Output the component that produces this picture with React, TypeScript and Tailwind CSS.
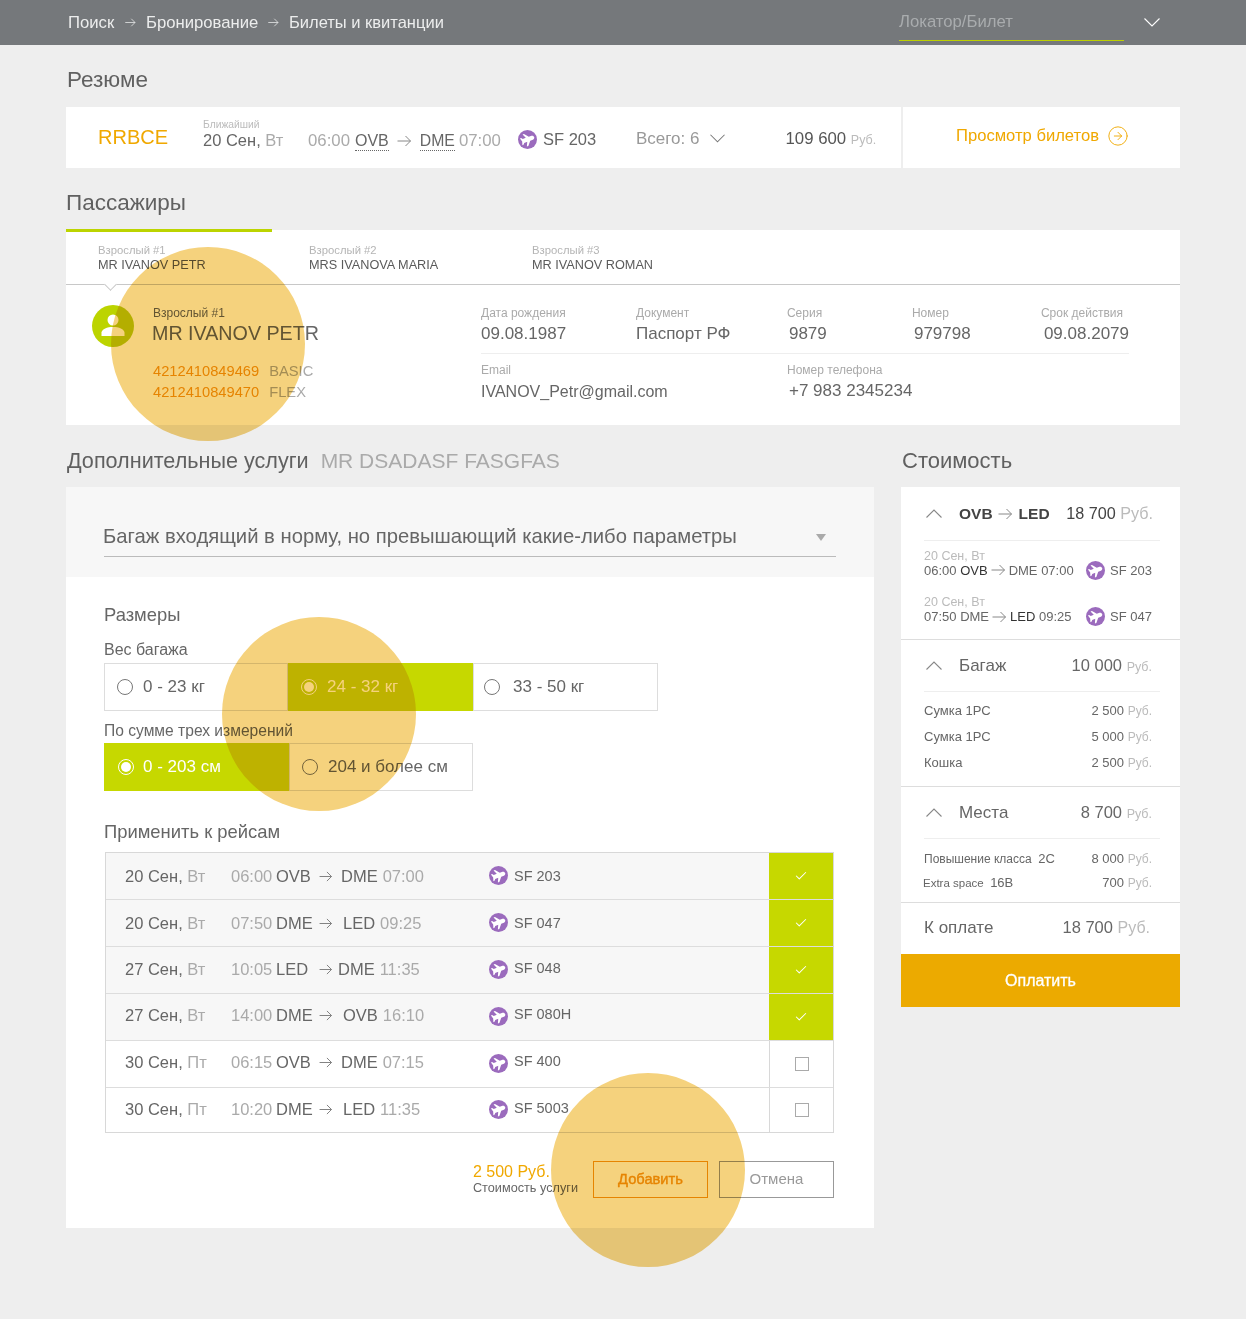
import React from 'react';
import { Check, CircleArrowRight } from 'lucide-react';

const flights = [
  { date: '20 Сен,', day: 'Вт', t1: '06:00', from: 'OVB', to: 'DME', t2: '07:00', no: 'SF 203', on: true, toCls: 'ml-[8px]', nudge: '' },
  { date: '20 Сен,', day: 'Вт', t1: '07:50', from: 'DME', to: 'LED', t2: '09:25', no: 'SF 047', on: true, toCls: 'ml-[10px]', nudge: '' },
  { date: '27 Сен,', day: 'Вт', t1: '10:05', from: 'LED', to: 'DME', t2: '11:35', no: 'SF 048', on: true, toCls: 'ml-[5px]', nudge: '-mt-[2px]' },
  { date: '27 Сен,', day: 'Вт', t1: '14:00', from: 'DME', to: 'OVB', t2: '16:10', no: 'SF 080H', on: true, toCls: 'ml-[10px]', nudge: '-mt-[4px]' },
  { date: '30 Сен,', day: 'Пт', t1: '06:15', from: 'OVB', to: 'DME', t2: '07:15', no: 'SF 400', on: false, toCls: 'ml-[8px]', nudge: '-mt-[4px]' },
  { date: '30 Сен,', day: 'Пт', t1: '10:20', from: 'DME', to: 'LED', t2: '11:35', no: 'SF 5003', on: false, toCls: 'ml-[10px]', nudge: '-mt-[2px]' },
];

function Arrow({ cls }: { cls: string }) {
  return (
    <svg viewBox="0 0 14 12" className={`shrink-0 ${cls}`} fill="none" stroke="currentColor" strokeWidth="1">
      <path d="M0 6h13M8 1l5 5-5 5" />
    </svg>
  );
}

function Chevron({ cls, up = false }: { cls: string; up?: boolean }) {
  return (
    <svg viewBox="0 0 16 9" className={`shrink-0 ${cls}`} fill="none" stroke="currentColor" strokeWidth="1.100">
      <path d={up ? 'M0.500 8.500L8 1l7.500 7.500' : 'M0.500 0.500L8 8l7.500-7.500'} />
    </svg>
  );
}

function PlaneBadge({ cls = '' }: { cls?: string }) {
  return (
    <span className={`w-[19px] h-[19px] rounded-full bg-[#9b6bbd] inline-flex items-center justify-center shrink-0 ${cls}`}>
      <svg viewBox="0 0 24 24" className="w-[17px] h-[17px] -rotate-[20deg]" fill="#fff">
        <path d="M22 12c0-1.600-1.300-3-3-3h-4L10 3H7.800l2.700 6H6L4.200 7H2.500L4 12l-1.500 5h1.700L6 15h4.500l-2.700 6H10l5-6h4c1.700 0 3-1.400 3-3z" />
      </svg>
    </span>
  );
}

function Radio({ on, label, cls, pad = 'pl-[12px]', gap = 'ml-[10px]' }: { on: boolean; label: string; cls: string; pad?: string; gap?: string }) {
  return (
    <div className={`${cls} ${pad} h-[48px] flex items-center text-[17px] ${on ? 'bg-[#c6d800] text-white' : 'border border-[#ddd] text-[#666] bg-white'}`}>
      <span className={`w-[16px] h-[16px] rounded-full border flex items-center justify-center shrink-0 ${on ? 'border-white' : 'border-[#777]'}`}>
        {on && <span className="w-[10px] h-[10px] rounded-full bg-white" />}
      </span>
      <span className={gap}>{label}</span>
    </div>
  );
}

function Rub({ cls = 'text-[14px]' }: { cls?: string }) {
  return <span className={`${cls} text-[#bbb]`}>Руб.</span>;
}

function Spot({ cls }: { cls: string }) {
  return <div className={`absolute w-[194px] h-[194px] rounded-full bg-[#f5d27d] mix-blend-multiply pointer-events-none ${cls}`} />;
}

export default function App() {
  return (
    <div className="relative h-[1319px] bg-[#eeeeee] text-[#666] overflow-hidden" style={{ fontFamily: '"Liberation Sans", Arial, sans-serif' }}>
      <header className="h-[45px] bg-[#75787b] flex items-center pl-[68px] pr-[86px] text-[16.700px] text-[#eceded]">
        <span className="w-[48px]">Поиск</span>
        <Arrow cls="w-[11px] h-[9px] ml-[9px] mr-[10px]" />
        <span className="w-[113px] whitespace-nowrap">Бронирование</span>
        <Arrow cls="w-[11px] h-[9px] ml-[9px] mr-[10px]" />
        <span className="text-[16.500px]">Билеты и квитанции</span>
        <div className="ml-auto self-start w-[225px] h-[41px] pt-[3px] border-b border-[#bcd000] flex items-center text-[#a9acae] mr-[20px]">Локатор/Билет</div>
        <Chevron cls="w-[16px] h-[9px] text-white" />
      </header>

      <main className="px-[66px] w-[1246px]">
        <h2 className="text-[22.500px] leading-[26px] mt-[22px] ml-[1px] text-[#606060]">Резюме</h2>
        <section className="mt-[14px] h-[61px] flex bg-white items-center">
          <div className="w-[835px] h-full flex items-center pl-[32px] text-[#666]">
            <span className="w-[105px] text-[#f0a800] text-[20px] -mt-[2px]">RRBCE</span>
            <div className="w-[105px] leading-none -mt-[7px]">
              <div className="text-[10.300px] text-[#bbb]">Ближайший</div>
              <div className="text-[16.500px] mt-[2px]">20 Сен, <span className="text-[#aaa]">Вт</span></div>
            </div>
            <div className="w-[210px] flex items-center text-[16.800px] mt-[7px]">
              <span className="w-[47px] text-[#aaa]">06:00</span>
              <span className="text-[16px] border-b border-dotted border-[#666] leading-[19px]">OVB</span>
              <Arrow cls="w-[15px] h-[12px] mx-[8px] text-[#888]" />
              <span className="text-[15.800px] border-b border-dotted border-[#666] leading-[19px]">DME</span>
              <span className="ml-[4px] text-[#aaa]">07:00</span>
            </div>
            <PlaneBadge cls="mt-[4px]" />
            <span className="ml-[6px] w-[93px] text-[16.500px] mt-[3px]">SF 203</span>
            <span className="text-[#999] text-[17px] mt-[3px]">Всего: 6</span>
            <Chevron cls="w-[15px] h-[9px] ml-[11px] mt-[2px] text-[#777]" />
            <span className="ml-[60px] text-[16.800px] mt-[2px] text-[#555] whitespace-nowrap">109 600 <Rub cls="text-[12.500px]" /></span>
          </div>
          <div className="w-[2px] h-full bg-[#eeeeee]" />
          <div className="flex-1 flex items-center pl-[53px] text-[#f0a800] text-[16.600px] -mt-[2px]">
            Просмотр билетов
            <CircleArrowRight className="w-[22px] h-[22px] ml-[8px]" strokeWidth={1} />
          </div>
        </section>

        <h2 className="text-[22.500px] leading-[26px] mt-[22px] text-[#606060]">Пассажиры</h2>
        <section className="mt-[14px] h-[195px] bg-white flex flex-col">
          <div className="relative h-[55px] shrink-0 border-b border-[#c8c8c8] flex pl-[32px]">
            <div className="absolute left-0 top-0 w-[206px] h-[3px] -mt-[1px] bg-[#bcd400]" />
            <div className="w-[211px] pt-[15px] leading-none">
              <div className="text-[11.300px] text-[#b5b5b5]">Взрослый #1</div>
              <div className="text-[12.700px] mt-[3px] text-[#5a5a5a]">MR IVANOV PETR</div>
            </div>
            <div className="w-[223px] pt-[15px] leading-none">
              <div className="text-[11.300px] text-[#b5b5b5]">Взрослый #2</div>
              <div className="text-[12.700px] mt-[3px] text-[#5a5a5a]">MRS IVANOVA MARIA</div>
            </div>
            <div className="pt-[15px] leading-none">
              <div className="text-[11.300px] text-[#b5b5b5]">Взрослый #3</div>
              <div className="text-[12.700px] mt-[3px] text-[#5a5a5a]">MR IVANOV ROMAN</div>
            </div>
            <div className="absolute left-[40px] -bottom-[5px] w-[9px] h-[9px] rotate-45 bg-white border-r border-b border-[#c8c8c8]" />
          </div>
          <div className="flex flex-1">
            <div className="w-[415px] flex pl-[26px] pt-[20px]">
              <div className="w-[42px] h-[42px] rounded-full bg-[#bcd400] flex items-center justify-center shrink-0">
                <svg viewBox="0 0 28 28" className="w-[28px] h-[28px]" fill="#fff">
                  <circle cx="14" cy="8" r="5.500" />
                  <path d="M2.500 24v-3.500C3 17 8 15 14 15s11 2 11.500 5.500V24z" />
                </svg>
              </div>
              <div className="ml-[19px] pt-[2px]">
                <div className="text-[12px] leading-none">Взрослый #1</div>
                <div className="text-[19.700px] leading-none mt-[5px] -ml-[1px] whitespace-nowrap">MR IVANOV PETR</div>
                <div className="mt-[17px] text-[14.700px] leading-[21px] whitespace-nowrap">
                  <div><span className="text-[#f0a000]">4212410849469</span><span className="ml-[10px] text-[#aaa]">BASIC</span></div>
                  <div><span className="text-[#f0a000]">4212410849470</span><span className="ml-[10px] text-[#aaa]">FLEX</span></div>
                </div>
              </div>
            </div>
            <div className="w-[648px] pt-[22px]">
              <div className="flex h-[47px] border-b border-[#eee] leading-none">
                <div className="w-[155px]"><div className="text-[12px] text-[#aaa]">Дата рождения</div><div className="text-[17px] mt-[6px]">09.08.1987</div></div>
                <div className="w-[151px]"><div className="text-[12px] text-[#aaa]">Документ</div><div className="text-[17px] mt-[6px]">Паспорт РФ</div></div>
                <div className="w-[125px]"><div className="text-[12px] text-[#aaa]">Серия</div><div className="text-[17px] mt-[6px] ml-[2px]">9879</div></div>
                <div className="w-[129px]"><div className="text-[12px] text-[#aaa]">Номер</div><div className="text-[17px] mt-[6px] ml-[2px]">979798</div></div>
                <div><div className="text-[12px] text-[#aaa]">Срок действия</div><div className="text-[17px] mt-[6px] ml-[3px]">09.08.2079</div></div>
              </div>
              <div className="flex mt-[10px] leading-none">
                <div className="w-[306px]"><div className="text-[12px] text-[#aaa]">Email</div><div className="text-[16px] mt-[8px]">IVANOV_Petr@gmail.com</div></div>
                <div><div className="text-[12px] text-[#aaa]">Номер телефона</div><div className="text-[17px] mt-[6px] ml-[2px]">+7 983 2345234</div></div>
              </div>
            </div>
          </div>
        </section>

        <div className="flex mt-[23px] items-start">
          <div className="w-[808px] shrink-0">
            <h2 className="text-[21.600px] leading-[26px] ml-[1px] text-[#606060] whitespace-nowrap">Дополнительные услуги <span className="ml-[6px] text-[21px] text-[#aaa]">MR DSADASF FASGFAS</span></h2>
            <section className="mt-[13px] h-[741px] bg-white">
              <div className="h-[90px] bg-[#f7f7f7] px-[38px] pt-[33px]">
                <div className="h-[37px] border-b border-[#bbb] flex items-start justify-between text-[20.250px] leading-[32px]">
                  <span className="-ml-[1px]">Багаж входящий в норму, но превышающий какие-либо параметры</span>
                  <span className="mr-[10px] mt-[14px] w-0 h-0 border-x-[5px] border-x-transparent border-t-[7px] border-t-[#aaa]" />
                </div>
              </div>
              <div className="px-[38px]">
                <h3 className="text-[18.400px] leading-[22px] mt-[27px]">Размеры</h3>
                <div className="text-[16px] leading-[20px] mt-[14px]">Вес багажа</div>
                <div className="flex mt-[3px]">
                  <Radio on={false} label="0 - 23 кг" cls="w-[184px]" />
                  <Radio on label="24 - 32 кг" cls="w-[185px]" pad="pl-[13px]" />
                  <Radio on={false} label="33 - 50 кг" cls="w-[185px]" pad="pl-[10px]" gap="ml-[13px]" />
                </div>
                <div className="text-[15.600px] leading-[20px] mt-[10px]">По сумме трех измерений</div>
                <div className="flex mt-[2px]">
                  <Radio on label="0 - 203 см" cls="w-[185px]" pad="pl-[14px]" gap="ml-[9px]" />
                  <Radio on={false} label="204 и более см" cls="w-[184px]" />
                </div>
                <h3 className="text-[18.400px] leading-[22px] mt-[30px]">Применить к рейсам</h3>
                <div className="mt-[9px] ml-[1px] w-[729px] border border-[#d8d8d8]">
                  {flights.map((f, i) => (
                    <div key={i} className={`flex items-center h-[47px] last:h-[44px] border-b last:border-b-0 border-[#ddd] text-[16.500px] ${f.on ? 'bg-[#f7f7f7]' : 'bg-white'}`}>
                      <span className={`w-[125px] pl-[19px] shrink-0 whitespace-nowrap ${f.nudge}`}>{f.date} <span className="text-[#aaa]">{f.day}</span></span>
                      <span className={`w-[258px] shrink-0 flex items-center whitespace-nowrap ${f.nudge}`}>
                        <span className="w-[45px] text-[#aaa]">{f.t1}</span>
                        <span className="w-[43px]">{f.from}</span>
                        <Arrow cls="w-[14px] h-[11px] text-[#777]" />
                        <span className={f.toCls}>{f.to}</span>
                        <span className="ml-[5px] text-[#aaa]">{f.t2}</span>
                      </span>
                      <PlaneBadge cls="-mt-[1px]" />
                      <span className={`ml-[6px] text-[14.500px] ${f.nudge || 'mt-[1px]'}`}>{f.no}</span>
                      <span className={`ml-auto w-[64px] h-full flex items-center justify-center shrink-0 ${f.on ? 'bg-[#c6d800] text-white' : 'border-l border-[#d8d8d8]'}`}>
                        {f.on ? <Check className="w-[14px] h-[14px]" strokeWidth={1.75} /> : <span className="w-[14px] h-[14px] border border-[#aaa]" />}
                      </span>
                    </div>
                  ))}
                </div>
                <div className="flex justify-end items-center mt-[28px] w-[730px]">
                  <div className="leading-none mr-[15px]">
                    <div className="text-[16px] text-[#f0a800]">2 500 Руб.</div>
                    <div className="text-[12.700px] mt-[2px] whitespace-nowrap">Стоимость услуги</div>
                  </div>
                  <button className="w-[115px] h-[37px] border border-[#f0a000] text-[#f0a000] text-[14.700px] [-webkit-text-stroke:0.4px] mr-[11px]">Добавить</button>
                  <button className="w-[115px] h-[37px] border border-[#999] text-[#999] text-[15px]">Отмена</button>
                </div>
              </div>
            </section>
          </div>

          <aside className="ml-[27px] w-[279px]">
            <h2 className="text-[22px] leading-[26px] ml-[1px] text-[#606060]">Стоимость</h2>
            <div className="mt-[13px] bg-white">
              <div className="h-[153px] border-b border-[#ddd] pl-[23px] pr-[20px]">
                <div className="h-[54px] border-b border-[#eee] flex items-center">
                  <Chevron up cls="w-[16px] h-[9px] ml-[2px] text-[#888]" />
                  <span className="ml-[17px] text-[#444] text-[15.500px] font-bold flex items-center">OVB<Arrow cls="w-[15px] h-[12px] ml-[5px] mr-[6px] text-[#888]" />LED</span>
                  <span className="ml-auto text-[16.200px] text-[#444] whitespace-nowrap mr-[7px]">18 700 <Rub cls="text-[16.200px]" /></span>
                </div>
                <div className="mt-[9px] text-[12.500px] leading-none text-[#bbb]">20 Сен, Вт</div>
                <div className="flex items-center text-[13px] leading-none -mt-[2px]">
                  <span className="w-[162px] flex items-center whitespace-nowrap">06:00&nbsp;<b className="font-normal text-[#333]">OVB</b><Arrow cls="w-[15px] h-[12px] mx-[3px] text-[#888]" />DME 07:00</span>
                  <PlaneBadge />
                  <span className="ml-[5px]">SF 203</span>
                </div>
                <div className="mt-[16px] text-[12.500px] leading-none text-[#bbb]">20 Сен, Вт</div>
                <div className="flex items-center text-[13px] leading-none -mt-[1px]">
                  <span className="w-[162px] flex items-center whitespace-nowrap">07:50 DME<Arrow cls="w-[15px] h-[12px] mx-[3px] text-[#888]" /><b className="font-normal text-[#333]">LED</b>&nbsp;09:25</span>
                  <PlaneBadge />
                  <span className="ml-[5px]">SF 047</span>
                </div>
              </div>
              <div className="h-[147px] border-b border-[#ddd] pl-[23px] pr-[20px]">
                <div className="h-[52px] border-b border-[#eee] flex items-center">
                  <Chevron up cls="w-[16px] h-[9px] ml-[2px] text-[#888]" />
                  <span className="ml-[17px] text-[17px]">Багаж</span>
                  <span className="ml-auto text-[16.500px] whitespace-nowrap mr-[8px]">10 000 <Rub cls="text-[12.500px]" /></span>
                </div>
                <div className="text-[13px] leading-[25px] mt-[6px]">
                  <div className="flex justify-between pr-[8px]"><span>Сумка 1РС</span><span>2 500 <Rub cls="text-[12px]" /></span></div>
                  <div className="flex justify-between pr-[8px]"><span>Сумка 1РС</span><span>5 000 <Rub cls="text-[12px]" /></span></div>
                  <div className="flex justify-between pr-[8px]"><span>Кошка</span><span>2 500 <Rub cls="text-[12px]" /></span></div>
                </div>
              </div>
              <div className="h-[116px] border-b border-[#ddd] pl-[23px] pr-[20px]">
                <div className="h-[52px] border-b border-[#eee] flex items-center">
                  <Chevron up cls="w-[16px] h-[9px] ml-[2px] text-[#888]" />
                  <span className="ml-[17px] text-[17px]">Места</span>
                  <span className="ml-auto text-[16.500px] whitespace-nowrap mr-[8px]">8 700 <Rub cls="text-[12.500px]" /></span>
                </div>
                <div className="text-[12px] leading-[24px] mt-[8px]">
                  <div className="flex justify-between items-center pr-[8px]"><span>Повышение класса&nbsp;&nbsp;<span className="text-[13px]">2С</span></span><span className="text-[13px]">8 000 <Rub cls="text-[12px]" /></span></div>
                  <div className="flex justify-between items-center pr-[8px] -ml-[1px]"><span className="text-[11.500px]">Extra space&nbsp;&nbsp;<span className="text-[13px]">16В</span></span><span className="text-[13px]">700 <Rub cls="text-[12px]" /></span></div>
                </div>
              </div>
              <div className="h-[51px] pl-[23px] pr-[30px] flex items-center justify-between">
                <span className="text-[17px] -mt-[2px]">К оплате</span>
                <span className="text-[16.500px] whitespace-nowrap -mt-[2px]">18 700 <Rub cls="text-[16px]" /></span>
              </div>
              <div className="h-[53px] bg-[#ecaa00] text-white text-[16px] [-webkit-text-stroke:0.3px] flex items-center justify-center">Оплатить</div>
            </div>
          </aside>
        </div>
      </main>

      <Spot cls="left-[111px] top-[247px]" />
      <Spot cls="left-[222px] top-[617px]" />
      <Spot cls="left-[551px] top-[1073px]" />
    </div>
  );
}
